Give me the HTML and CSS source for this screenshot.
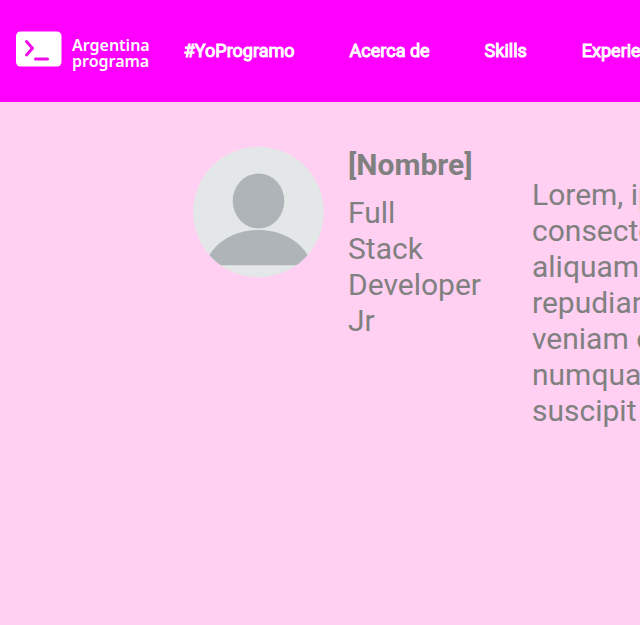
FILE: index.html
```html
<!DOCTYPE html>
<html lang="es">
<head>
<meta charset="utf-8">
<meta name="viewport" content="width=device-width, initial-scale=1">
<title>Argentina programa</title>
<link rel="stylesheet" href="styles.css">
</head>
<body>
<header class="header">
  <a class="brand" href="#inicio">
    <svg class="brand-icon" viewBox="0 0 46 36" aria-hidden="true">
      <rect y="0.500" width="45.500" height="35" rx="4.500" fill="#fff"/>
      <path d="M10.500 10.500l6 6.700-6 6.800M19.500 28h12" fill="none" stroke="#f00be8" stroke-width="3" stroke-linecap="round" stroke-linejoin="round"/>
    </svg>
    <span class="brand-name">Argentina<br>programa</span>
  </a>
  <nav class="nav">
    <a href="#yoprogramo">#YoProgramo</a>
    <a href="#acerca">Acerca de</a>
    <a href="#skills">Skills</a>
    <a href="#experiencia">Experiencia</a>
  </nav>
</header>
<main class="profile" id="acerca">
  <svg class="avatar" viewBox="0 0 131 131" role="img" aria-label="Foto de perfil">
    <defs><clipPath id="round"><circle cx="65.500" cy="65" r="65.300"/></clipPath></defs>
    <g clip-path="url(#round)">
      <rect width="131" height="131" fill="#e4e7e8"/>
      <ellipse cx="65.500" cy="54" rx="25.800" ry="27.500" fill="#aeb4b7"/>
      <path d="M12 118.300C18 97 40 83 65.500 83S113 97 119 118.300z" fill="#aeb4b7"/>
    </g>
  </svg>
  <section class="identity">
    <h1>[Nombre]</h1>
    <p>Full<br>Stack<br>Developer<br>Jr</p>
  </section>
  <p class="about">Lorem, ipsum dolor sit amet<br>consectetur adipisicing elit<br>aliquam quibusdam<br>repudiandae dolorum<br>veniam eos officia<br>numquam voluptas<br>suscipit</p>
</main>
</body>
</html>
```
FILE: styles.css
```css
* {
  box-sizing: border-box;
}

body {
  margin: 0;
  min-height: 100vh;
  overflow: hidden;
  background: #ffd0f1;
  color: #808080;
  font-family: Roboto, "Liberation Sans", sans-serif;
}

.header {
  display: flex;
  align-items: center;
  gap: 34px;
  padding: 30px 16px;
  background: #ff00ff;
}

.brand {
  display: flex;
  flex: none;
  gap: 10px;
  height: 42px;
  color: #fff;
  text-decoration: none;
}

.brand-icon {
  width: 46px;
  height: 36px;
  margin-top: 1px;
}

.brand-name {
  padding-top: 7px;
  font: 600 16px/16px "Noto Sans", sans-serif;
}

.nav {
  display: flex;
  gap: 55px;
  white-space: nowrap;
}

.nav a {
  color: #fff;
  font-size: 18px;
  font-weight: 400;
  line-height: 20px;
  text-decoration: none;
  -webkit-text-stroke: 1px #fff;
}

.profile {
  display: flex;
  align-items: flex-start;
  padding: 45px 0 0 193px;
}

.avatar {
  flex: none;
  width: 131px;
  height: 131px;
  margin-right: 24px;
}

.identity {
  flex: none;
  width: 136px;
  margin-right: 48px;
  font-size: 30px;
  line-height: 36px;
}

.identity h1 {
  margin: 0 0 12px;
  font-size: 30px;
  font-weight: 700;
  line-height: 36px;
}

.identity p {
  margin: 0;
}

.about {
  flex: none;
  margin: 30px 0 0;
  font-size: 30px;
  line-height: 36px;
  white-space: nowrap;
}
```
